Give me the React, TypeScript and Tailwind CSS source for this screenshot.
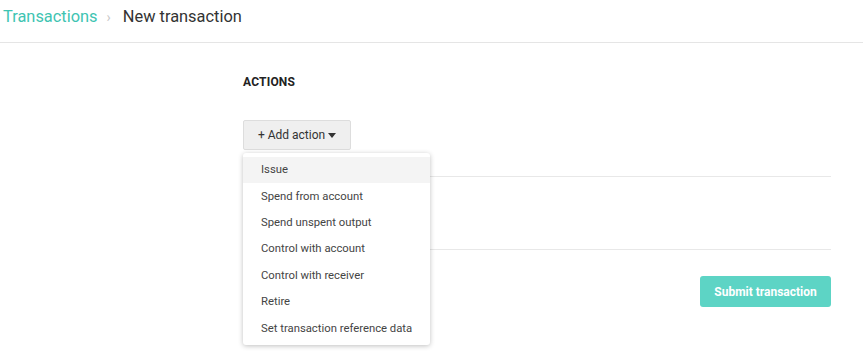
import React from "react";

const items = [
  "Issue",
  "Spend from account",
  "Spend unspent output",
  "Control with account",
  "Control with receiver",
  "Retire",
  "Set transaction reference data",
];

export default function App() {
  return (
    <div className="w-[863px] h-[356px] bg-white overflow-hidden relative" style={{ fontFamily: "Roboto, 'Noto Sans', sans-serif" }}>
      <div className="h-[43px] border-b border-[#e5e5e5] flex items-center pl-[3px] pb-[7px] text-[16.4px]">
        <span className="text-[#3ec4b2]">Transactions</span>
        <span className="text-[#c8c8c8] ml-[9px] mr-[12px] text-[14px]">›</span>
        <span className="text-[#333]">New transaction</span>
      </div>
      <div className="pl-[243px] pr-[32px]">
        <div className="pt-[30px] text-[12px] font-bold text-[#222] tracking-[0.2px]">ACTIONS</div>
        <div className="relative mt-[29px]">
          <button className="h-[30px] w-[108px] bg-[#efefef] border border-[#ddd] rounded-[2px] text-[12px] text-[#333] flex items-center justify-center gap-[3px]">
            <span>+ Add action</span>
            <svg width="8" height="5" viewBox="0 0 8 5"><path d="M0 0h8L4 5z" fill="#333" /></svg>
          </button>
          <div className="absolute left-0 top-[33px] w-[187px] bg-white rounded-[3px] shadow-[0_1px_5px_rgba(0,0,0,0.25)] pt-[4px] pb-[3px] z-10">
            {items.map((t, i) => (
              <div key={t} className={`h-[26.4px] flex items-center pl-[18px] pt-[1px] text-[11.3px] text-[#444] ${i === 0 ? "bg-[#f4f4f4]" : ""}`}>{t}</div>
            ))}
          </div>
          <div className="mt-[26px] border-t border-[#e8e8e8] h-[73px]" />
          <div className="border-t border-[#e8e8e8]" />
          <div className="flex justify-end mt-[26px]">
            <button className="h-[31px] w-[131px] bg-[#5dd4c5] rounded-[3px] text-white text-[12px] font-bold">Submit transaction</button>
          </div>
        </div>
      </div>
    </div>
  );
}
